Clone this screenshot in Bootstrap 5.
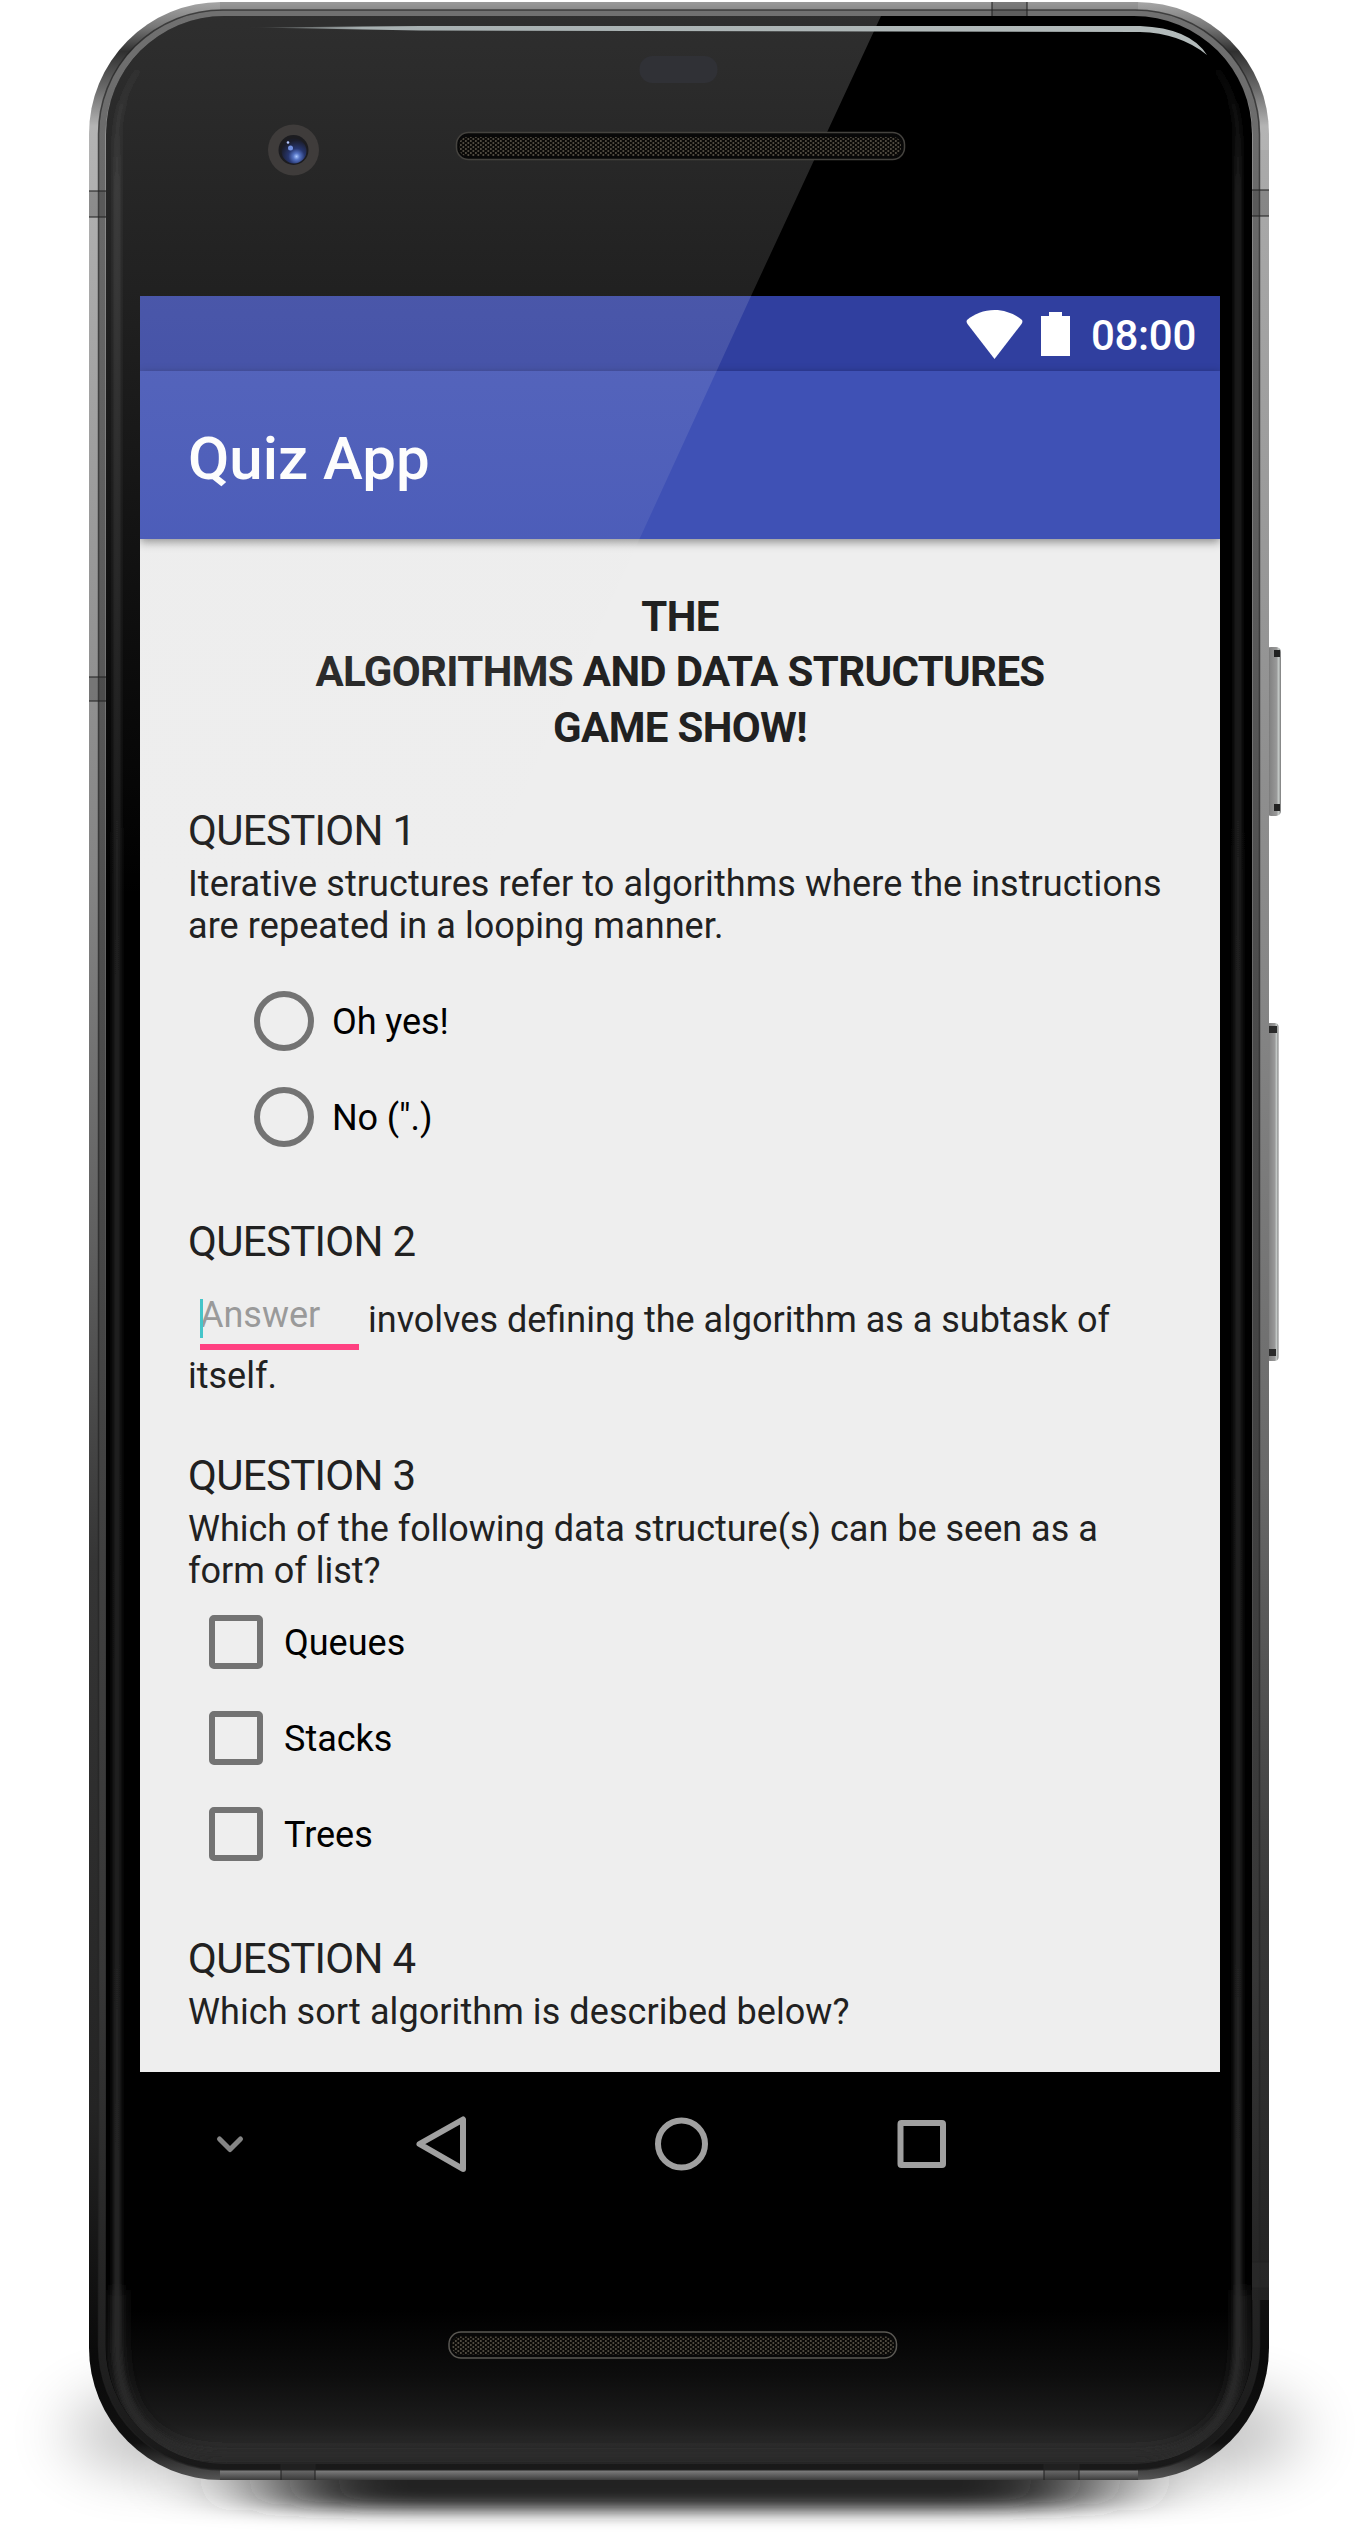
<!DOCTYPE html>
<html lang="en">
<head>
<meta charset="utf-8">
<meta name="viewport" content="width=device-width, initial-scale=1">
<title>Quiz App</title>
<link rel="stylesheet" href="https://cdn.jsdelivr.net/npm/bootstrap@5.3.0/dist/css/bootstrap.min.css">
<style>
body{background:#fff;font-family:Roboto,sans-serif;color:#212121;overflow:hidden}
.stage{width:1370px;height:2534px;padding:296px 150px 0 140px}
.layer{left:0;top:0;width:1370px;height:2534px;pointer-events:none}
.phone-screen{width:1080px;height:1776px;background:#eee}
.statusbar{height:75px;background:#303f9f;padding:3px 24px 0 0;font-size:42px;font-weight:500;line-height:75px;letter-spacing:-.3px}
.wifi-icon{margin:0 18px 2px 0}
.battery-icon{margin:0 21px 2px 0}
.appbar{height:168px;background:#3f51b5;padding:7px 48px 0;box-shadow:0 3px 9px rgba(0,0,0,.42)}
.appbar h1{font-size:60px;font-weight:500;line-height:72px}
.quiz{padding:50px 48px 0}
.show-title{font-size:42px;font-weight:700;line-height:55.3px;letter-spacing:-.65px;margin-bottom:51px}
.q-head{font-size:42px;font-weight:400;line-height:49px;letter-spacing:-.7px;margin-bottom:8px}
.q-text{font-size:36px;line-height:42px;margin:0}
.wide-set{letter-spacing:.08px}
.opt{height:96px;font-size:36px;color:#000;line-height:42px}
.opt-label{padding-top:3px}
.radio-dot{width:60px;height:60px;border:6px solid #737373;border-radius:50%;margin-right:18px}
.tick-box{width:54px;height:54px;border:6px solid #737373;border-radius:5px;margin-right:21px}
.radios{padding:26px 0 0 66px;margin-bottom:52px;letter-spacing:-.1px}
.ticks{padding:2px 0 0 21px;margin-bottom:52px}
.blank{width:159px;height:51px;margin:33px 9px 0 12px;border-bottom:6px solid #ff4081;color:#9a9a9a;font-size:36px;line-height:33px}
.caret{left:0;top:0;width:3px;height:39px;background:#45c5c9}
.fill-row{height:89px;margin-top:-8px}
.fill-row .q-text{padding-top:33px}
.fill{margin-bottom:54px}
.keys{width:1080px;height:144px}
</style>
<script src="https://cdn.jsdelivr.net/npm/bootstrap@5.3.0/dist/js/bootstrap.bundle.min.js"></script>
</head>
<body>
<div class="stage position-relative overflow-hidden">
  <!-- device body -->
  <svg class="layer position-absolute" viewBox="0 0 1370 2534" aria-hidden="true">
    <defs>
      <linearGradient id="rim" x1="0" y1="0" x2="0" y2="1">
        <stop offset="0" stop-color="#a6a6a6"/><stop offset=".01" stop-color="#777"/><stop offset=".02" stop-color="#303030"/><stop offset=".035" stop-color="#6a6a6a"/><stop offset=".05" stop-color="#b4b4b4"/>
        <stop offset=".16" stop-color="#a2a2a2"/><stop offset=".35" stop-color="#858585"/><stop offset=".5" stop-color="#606060"/><stop offset=".63" stop-color="#353535"/><stop offset=".85" stop-color="#242424"/><stop offset=".95" stop-color="#0a0a0a"/><stop offset=".985" stop-color="#101010"/><stop offset="1" stop-color="#555"/>
      </linearGradient>
      <linearGradient id="rimR" x1="0" y1="0" x2="0" y2="1">
        <stop offset="0" stop-color="#aaa"/><stop offset=".4" stop-color="#858585"/><stop offset=".62" stop-color="#686868"/><stop offset=".82" stop-color="#383838"/><stop offset="1" stop-color="#222"/>
      </linearGradient>
      <linearGradient id="bevel" x1="0" y1="0" x2="0" y2="1">
        <stop offset="0" stop-color="#707070"/><stop offset=".4" stop-color="#4c4c4c"/><stop offset=".8" stop-color="#373737"/><stop offset="1" stop-color="#191919"/>
      </linearGradient>
      <linearGradient id="chin" x1="0" y1="2310" x2="0" y2="2463" gradientUnits="userSpaceOnUse">
        <stop offset="0" stop-color="#000"/><stop offset=".42" stop-color="#0d0d0d"/><stop offset=".75" stop-color="#1c1c1c"/><stop offset=".92" stop-color="#2e2e2e"/><stop offset="1" stop-color="#272727"/>
      </linearGradient>
      <linearGradient id="edge" x1="0" y1="50" x2="0" y2="2460" gradientUnits="userSpaceOnUse"><stop offset="0" stop-color="#222" stop-opacity="0"/><stop offset=".06" stop-color="#222"/><stop offset="1" stop-color="#2a2a2a"/></linearGradient>
      <linearGradient id="topMetal" x1="0" y1="0" x2="0" y2="1"><stop offset="0" stop-color="#999"/><stop offset=".5" stop-color="#8a8a8a"/><stop offset=".62" stop-color="#333"/><stop offset=".8" stop-color="#777"/><stop offset="1" stop-color="#444"/></linearGradient>
      <linearGradient id="botMetal" x1="0" y1="0" x2="0" y2="1"><stop offset="0" stop-color="#222"/><stop offset=".3" stop-color="#2c2c2c"/><stop offset=".42" stop-color="#858585"/><stop offset="1" stop-color="#3c3c3c"/></linearGradient>
      <linearGradient id="glow"><stop offset="0" stop-color="#a7b0b1" stop-opacity="0"/><stop offset=".12" stop-color="#a7b0b1"/><stop offset="1" stop-color="#b3bbbb"/></linearGradient>
      <linearGradient id="keyMetal"><stop offset="0" stop-color="#666"/><stop offset=".3" stop-color="#858585"/><stop offset=".7" stop-color="#999"/><stop offset=".85" stop-color="#c5cac8"/><stop offset="1" stop-color="#777"/></linearGradient>
      <radialGradient id="unused" />
      <filter id="core" x="-30%" y="-100%" width="160%" height="300%"><feGaussianBlur stdDeviation="62 9"/></filter>
      <filter id="wide" x="-20%" y="-100%" width="140%" height="300%"><feGaussianBlur stdDeviation="34 26"/></filter>
      <filter id="b7"><feGaussianBlur stdDeviation="7"/></filter>
      <filter id="b3"><feGaussianBlur stdDeviation="2.500"/></filter>
      <clipPath id="glass"><rect x="106" y="16" width="1146" height="2448" rx="118"/></clipPath>
    </defs>
    <rect x="75" y="2390" width="1220" height="84" rx="50" fill="#000" opacity=".22" filter="url(#wide)"/>
    <rect x="270" y="2430" width="830" height="80" rx="30" fill="#222" filter="url(#core)"/>
    <!-- side keys -->
    <rect x="1266" y="647" width="15" height="169" rx="5" fill="url(#keyMetal)"/>
    <path d="M1274 650h6v7h-6zM1274 804h6v7h-6z" fill="#222"/>
    <rect x="1266" y="1023" width="12.5" height="338" rx="4" fill="url(#keyMetal)"/>
    <path d="M1269 1026h8v7h-8zM1269 1349h7v7h-7z" fill="#2a2a2a"/>
    <rect x="89" y="2" width="1180" height="2478" rx="132" fill="url(#rim)"/>
    <path d="M1252 150H1269V2300H1252z" fill="url(#rimR)"/>
    <path d="M220 2H1138V17H220z" fill="url(#topMetal)"/>
    <path d="M220 2462H1138V2480H220z" fill="url(#botMetal)"/>
    <rect x="102" y="13.500" width="1154" height="2453" rx="121" fill="none" stroke="url(#bevel)" stroke-width="7"/>
    <rect x="98.500" y="10" width="1161" height="2460" rx="124" fill="none" stroke="#222" stroke-opacity=".7" stroke-width="1.500"/>
    <rect x="106" y="16" width="1146" height="2448" rx="118" fill="#000"/>
    <g clip-path="url(#glass)">
      <rect x="106" y="2310" width="1146" height="154" fill="url(#chin)"/>
      <path d="M117 2290V2345Q119 2455 224 2457H1134Q1240 2455 1242 2345V2290" fill="none" stroke="#2c2c2c" stroke-width="10" filter="url(#b7)"/>
      <path d="M150 56Q117 90 117 140V2345Q119 2455 224 2455H1134Q1238 2455 1238 2345V140Q1238 90 1206 56" fill="none" stroke="url(#edge)" stroke-width="7" filter="url(#b3)"/>
    </g>
    <!-- antenna seams -->
    <g fill="#333" fill-opacity=".28">
      <path d="M89 191h17v26h-17zM1252 190h17v26h-17zM992 2h35v14h-35zM89 677h17v24h-17zM1252 2262h17v26h-17zM281 2464h34v16h-34zM1044 2464h35v16h-35z"/>
    </g>
    <path d="M89 191h17M89 217h17M1252 190h17M1252 216h17M992 2v14M1027 2v14M89 677h17M89 701h17M1252 2262h17M1252 2288h17M281 2464v16M315 2464v16M1044 2464v16M1079 2464v16" stroke="#222" stroke-opacity=".7" stroke-width="1.500"/>
  </svg>

  <main class="phone-screen position-relative overflow-hidden">
    <div class="statusbar d-flex justify-content-end align-items-center text-white">
      <svg class="wifi-icon" width="57" height="49" viewBox="0 0 57 49"><path d="M28.500 0C39 0 49 4 56 10Q57 12 55.500 14L28.500 49 1.500 14Q0 12 1 10 C8 4 18 0 28.500 0z" fill="#fff"/></svg>
      <svg class="battery-icon" width="29" height="44" viewBox="0 0 29 44"><path d="M8 0h13v4h8v40H0V4h8z" fill="#fff"/></svg>
      <span>08:00</span>
    </div>
    <header class="appbar position-relative d-flex align-items-center text-white"><h1 class="m-0">Quiz App</h1></header>
    <div class="quiz">
      <h2 class="show-title text-center">THE<br>ALGORITHMS AND DATA STRUCTURES<br>GAME SHOW!</h2>

      <h3 class="q-head">QUESTION 1</h3>
      <p class="q-text wide-set text-nowrap">Iterative structures refer to algorithms where the instructions<br>are repeated in a looping manner.</p>
      <div class="radios">
        <div class="opt d-flex align-items-center"><span class="radio-dot"></span><span class="opt-label">Oh yes!</span></div>
        <div class="opt d-flex align-items-center"><span class="radio-dot"></span><span class="opt-label">No (".)</span></div>
      </div>

      <h3 class="q-head">QUESTION 2</h3>
      <div class="fill">
        <div class="fill-row d-flex">
          <div class="blank position-relative">Answer<span class="caret position-absolute"></span></div>
          <p class="q-text text-nowrap">involves defining the algorithm as a subtask of</p>
        </div>
        <p class="q-text">itself.</p>
      </div>

      <h3 class="q-head">QUESTION 3</h3>
      <p class="q-text text-nowrap">Which of the following data structure(s) can be seen as a<br>form of list?</p>
      <div class="ticks">
        <div class="opt d-flex align-items-center"><span class="tick-box"></span><span class="opt-label">Queues</span></div>
        <div class="opt d-flex align-items-center"><span class="tick-box"></span><span class="opt-label">Stacks</span></div>
        <div class="opt d-flex align-items-center"><span class="tick-box"></span><span class="opt-label">Trees</span></div>
      </div>

      <h3 class="q-head">QUESTION 4</h3>
      <p class="q-text wide-set">Which sort algorithm is described below?</p>
    </div>
  </main>
  <nav class="keys position-relative">
    <svg width="1080" height="144" viewBox="0 0 1080 144" fill="none" stroke="#a0a0a0" stroke-width="6" stroke-linejoin="round" stroke-linecap="round" class="d-block">
      <path d="M79.500 67L90 77.500 100.500 67" stroke="#858585" stroke-width="5"/>
      <path d="M323 47.500V97L279.500 72z"/><circle cx="541.500" cy="72" r="23.500"/><rect x="760.500" y="51" width="42.500" height="42" rx="1"/>
    </svg>
  </nav>

  <!-- glass reflections, speakers and camera -->
  <svg class="layer position-absolute" viewBox="0 0 1370 2534" aria-hidden="true">
    <defs>
      <linearGradient id="glare" x1="0" y1="16" x2="0" y2="900" gradientUnits="userSpaceOnUse"><stop offset="0" stop-color="#e8e8e8" stop-opacity=".2"/><stop offset=".32" stop-color="#e8e8e8" stop-opacity=".14"/><stop offset=".59" stop-color="#e8e8e8" stop-opacity=".08"/><stop offset="1" stop-color="#e8e8e8" stop-opacity="0"/></linearGradient>
      <pattern id="mesh" width="5" height="4" patternUnits="userSpaceOnUse"><rect width="5" height="4" fill="#0b0a08"/><rect width="1.700" height="2" fill="#4f4a40"/><rect x="2.500" y="2" width="1.700" height="2" fill="#4f4a40"/></pattern>
      <radialGradient id="lens" cx=".6" cy=".72" r=".65"><stop offset="0" stop-color="#a9c6ff"/><stop offset=".2" stop-color="#5674c4"/><stop offset=".5" stop-color="#26356d"/><stop offset="1" stop-color="#1b1d2a"/></radialGradient>
    </defs>
    <path d="M106 900V134A118 118 0 0 1 224 16H881L751 296 639.500 539 474 900z" fill="url(#glare)"/>
    <path d="M247 27.500L420 26H1140Q1190 28 1207 55Q1180 33 1140 32L420 30.500z" fill="url(#glow)"/>
    <rect x="639.500" y="56" width="78" height="27" rx="13" fill="#303136"/>
    <rect x="456.500" y="132.500" width="448" height="27" rx="12" fill="#080808" stroke="#45433f" stroke-width="1.500"/>
    <rect x="459" y="137" width="442" height="19" rx="8" fill="url(#mesh)"/>
    <rect x="449" y="2332" width="447.500" height="26" rx="12" fill="#080808" stroke="#5a5853" stroke-width="1.500"/>
    <rect x="452" y="2336.500" width="442" height="18" rx="8" fill="url(#mesh)"/>
    <circle cx="293.500" cy="150" r="25.500" fill="#3f3c3b"/>
    <circle cx="293.500" cy="150" r="15" fill="#1c1c20"/>
    <circle cx="294" cy="151" r="12.500" fill="url(#lens)"/>
    <circle cx="290.500" cy="148" r="2.500" fill="#7290e0"/><circle cx="288" cy="142.500" r="1.300" fill="#b6c8ff"/>
  </svg>
</div>
</body>
</html>
